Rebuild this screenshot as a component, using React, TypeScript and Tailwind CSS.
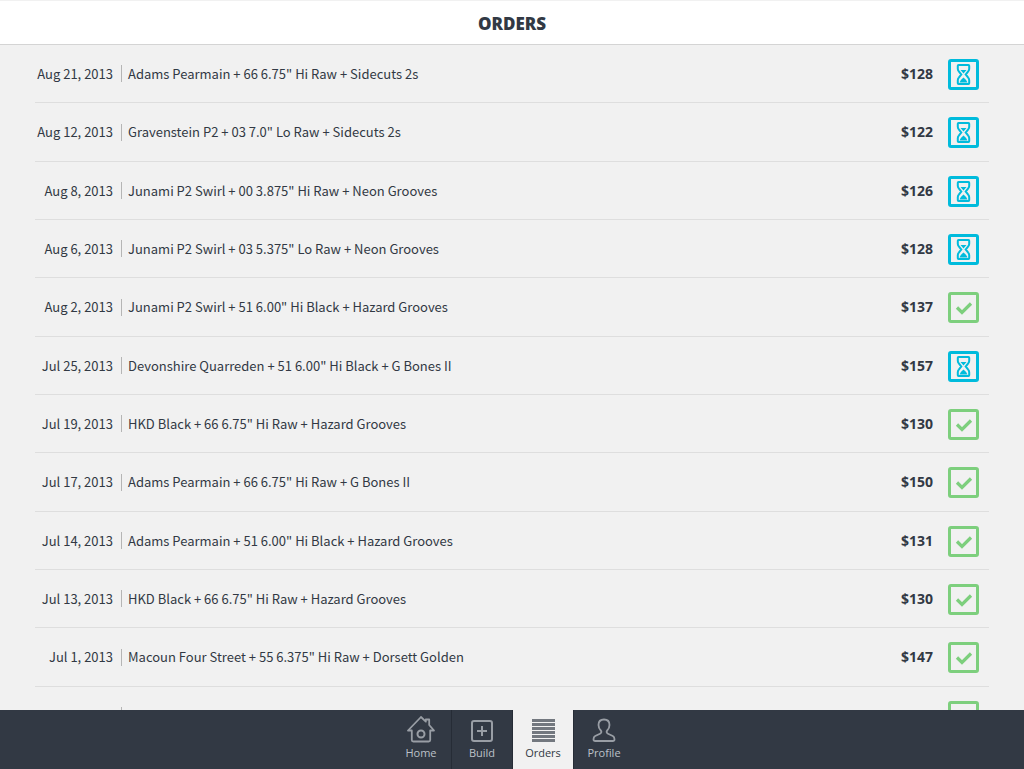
interface Order {
  date: string;
  item: string;
  price: number;
  done: boolean;
}

const orders: Order[] = [
  { date: "Aug 21, 2013", item: 'Adams Pearmain + 66 6.75" Hi Raw + Sidecuts 2s', price: 128, done: false },
  { date: "Aug 12, 2013", item: 'Gravenstein P2 + 03 7.0" Lo Raw + Sidecuts 2s', price: 122, done: false },
  { date: "Aug 8, 2013", item: 'Junami P2 Swirl + 00 3.875" Hi Raw + Neon Grooves', price: 126, done: false },
  { date: "Aug 6, 2013", item: 'Junami P2 Swirl + 03 5.375" Lo Raw + Neon Grooves', price: 128, done: false },
  { date: "Aug 2, 2013", item: 'Junami P2 Swirl + 51 6.00" Hi Black + Hazard Grooves', price: 137, done: true },
  { date: "Jul 25, 2013", item: 'Devonshire Quarreden + 51 6.00" Hi Black + G Bones II', price: 157, done: false },
  { date: "Jul 19, 2013", item: 'HKD Black + 66 6.75" Hi Raw + Hazard Grooves', price: 130, done: true },
  { date: "Jul 17, 2013", item: 'Adams Pearmain + 66 6.75" Hi Raw + G Bones II', price: 150, done: true },
  { date: "Jul 14, 2013", item: 'Adams Pearmain + 51 6.00" Hi Black + Hazard Grooves', price: 131, done: true },
  { date: "Jul 13, 2013", item: 'HKD Black + 66 6.75" Hi Raw + Hazard Grooves', price: 130, done: true },
  { date: "Jul 1, 2013", item: 'Macoun Four Street + 55 6.375" Hi Raw + Dorsett Golden', price: 147, done: true },
  { date: "Jun 28, 2013", item: 'HKD Black + 66 6.75" Hi Raw + Sidecuts 2s', price: 130, done: true },
];

function StatusIcon({ done }: { done: boolean }) {
  if (done) {
    return (
      <svg role="img" aria-label="Completed" width="31" height="31" viewBox="0 0 31 31" fill="none" stroke="#7dcf7d" className="block">
        <rect x="1.5" y="1.5" width="28" height="28" rx="1.5" strokeWidth="3" />
        <path d="M9 15.5l5 5 9-9" strokeWidth="3.2" />
      </svg>
    );
  }
  return (
    <svg role="img" aria-label="Pending" width="31" height="31" viewBox="0 0 31 31" fill="none" stroke="#00bbdc" className="block">
      <rect x="1.5" y="1.5" width="28" height="28" rx="1.5" strokeWidth="3" />
      <path
        d="M10.5 6h10q.7 0 .7.7v3q0 1.600-1 2.700l-2.500 3.100 2.500 3.100q1 1.100 1 2.700v3q0 .7-.7.7h-10q-.7 0-.7-.7v-3q0-1.600 1-2.700l2.500-3.100-2.500-3.100q-1-1.100-1-2.700v-3q0-.7.7-.7z"
        strokeWidth="2"
      />
      <path d="M12.500 11h6l-3 3.500zM11.500 23.500q.8-2.500 4-5 3.200 2.500 4 5z" fill="#00bbdc" stroke="none" />
    </svg>
  );
}

function HomeIcon() {
  return (
    <svg width="28" height="28" viewBox="0 0 28 28" fill="none" stroke="currentColor" strokeWidth="1.8" strokeLinejoin="round">
      <path d="M14 2L1 15.500h3.800v9.500q0 1.500 1.500 1.500h15.400q1.500 0 1.500-1.500v-9.500H27l-4.800-5.500V4.500h-3.400v2.200z" />
      <circle cx="14" cy="19" r="3.500" strokeWidth="2" />
    </svg>
  );
}

function BuildIcon() {
  return (
    <svg width="28" height="28" viewBox="0 0 28 28" fill="none" stroke="currentColor">
      <rect x="4" y="6" width="20" height="20" rx="2" strokeWidth="2" />
      <path d="M14 11v10M9 16h10" strokeWidth="2" />
    </svg>
  );
}

function OrdersIcon() {
  return (
    <svg width="28" height="28" viewBox="0 0 28 28" fill="currentColor">
      <path d="M3 4h23v3H3zM3 8h23v3H3zM3 12h23v3H3zM3 16h23v3H3zM3 20h23v3H3zM3 24h23v3H3z" />
    </svg>
  );
}

function ProfileIcon() {
  return (
    <svg width="28" height="28" viewBox="0 0 28 28" fill="none" stroke="currentColor" strokeWidth="1.800" strokeLinejoin="round">
      <path d="M14 4.500c-3.600 0-5.500 2.400-5.500 5.500 0 2.500 1 4.200 2.300 5.500 1 1 .8 2.400-.8 3.200l-4.800 2.300c-1.200.6-1.700 1.600-1.700 3.200 0 1.200.6 1.800 1.800 1.800h17.400c1.200 0 1.800-.6 1.800-1.800 0-1.600-.5-2.600-1.700-3.200L18 18.700c-1.600-.8-1.800-2.200-.8-3.200 1.300-1.300 2.300-3 2.300-5.500 0-3.100-1.900-5.500-5.500-5.500z" />
    </svg>
  );
}

const tabs = [
  { label: "Home", Icon: HomeIcon },
  { label: "Build", Icon: BuildIcon },
  { label: "Orders", Icon: OrdersIcon },
  { label: "Profile", Icon: ProfileIcon },
];

export default function App() {
  return (
    <div className="flex h-screen flex-col overflow-hidden bg-[#f1f1f1] font-['Open_Sans',sans-serif] text-[#323944]">
      <header className="flex h-[45px] shrink-0 items-center justify-center border-t border-b border-t-[#f1f1f1] border-b-[#d4d4d4] bg-white pt-0.5">
        <h1 className="text-[17px] leading-6 font-extrabold">ORDERS</h1>
      </header>

      <main className="min-h-0 flex-1 overflow-y-auto px-[35px] [scrollbar-width:none]">
        <table className="w-full border-separate border-spacing-0 font-['Noto_Sans_CJK_SC',sans-serif] text-[13px] leading-[18px]">
          <tbody>
            {orders.map((order) => (
              <tr key={order.date} className="h-[58px] nth-[3n+2]:h-[59px]">
                <td className="w-[86px] border-b border-[#dedede] pr-2 text-right whitespace-nowrap">{order.date}</td>
                <td className="border-b border-[#dedede]">
                  <div className="flex items-center">
                    <span className="h-[17px] w-px bg-[#b5b5b5]"></span>
                    <span className="pl-1.5">{order.item}</span>
                  </div>
                </td>
                <td className="border-b border-[#dedede] pr-[15px] text-right font-['Open_Sans',sans-serif] text-sm leading-[18px] font-bold">
                  ${order.price}
                </td>
                <td className="w-[41px] border-b border-[#dedede] pt-3.5 align-top">
                  <StatusIcon done={order.done} />
                </td>
              </tr>
            ))}
          </tbody>
        </table>
      </main>

      <nav className="flex h-[59px] shrink-0 justify-center bg-[#323944] pl-0.5">
        {tabs.map(({ label, Icon }) => {
          const active = label === "Orders";
          return (
            <a
              key={label}
              href={`#${label.toLowerCase()}`}
              aria-current={active ? "page" : undefined}
              className={
                active
                  ? "flex w-[61px] flex-col items-center border-r border-[#262c36] bg-[#f1f1f1] pt-[5px] text-[#73787f]"
                  : "flex w-[61px] flex-col items-center border-r border-[#262c36] pt-[5px] text-[#999ea5] last:border-transparent"
              }
            >
              <Icon />
              <span
                className={
                  active ? "text-[11px] leading-5 text-[#323944]" : "text-[11px] leading-5 text-[#bcc1c8]"
                }
              >
                {label}
              </span>
            </a>
          );
        })}
      </nav>
    </div>
  );
}
